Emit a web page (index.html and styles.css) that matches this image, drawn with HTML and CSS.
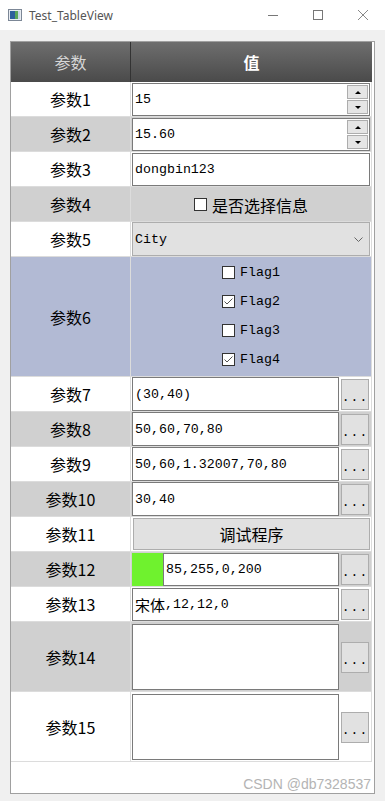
FILE: index.html
```html
<!DOCTYPE html>
<html lang="zh">
<head>
    <meta charset="UTF-8">
    <meta name="viewport" content="width=device-width, initial-scale=1.0">
    <title>Test_TableView</title>
    <link rel="stylesheet" href="styles.css">
</head>
<body>
    <div class="titlebar">
        <svg class="app-icon" width="14" height="12" viewBox="0 0 14 12">
            <rect x="0.5" y="0.5" width="13" height="11" fill="#e8ecf2" stroke="#7c8796"/>
            <rect x="2" y="2" width="5" height="8" fill="#2e5f9c"/>
            <rect x="7" y="2" width="3" height="8" fill="#5aa65a"/>
            <rect x="10" y="2" width="2" height="8" fill="#c9d6e6"/>
        </svg>
        <span class="title">Test_TableView</span>
        <div class="controls">
            <span class="ctl"><svg width="12" height="12" viewBox="0 0 12 12"><line x1="1" y1="6.5" x2="11" y2="6.5" stroke="#777"/></svg></span>
            <span class="ctl"><svg width="12" height="12" viewBox="0 0 12 12"><rect x="1.5" y="1.5" width="9" height="9" fill="none" stroke="#777"/></svg></span>
            <span class="ctl"><svg width="12" height="12" viewBox="0 0 12 12"><path d="M1 1L11 11M11 1L1 11" stroke="#888" fill="none"/></svg></span>
        </div>
    </div>

    <div class="client">
        <div class="frame">
            <div class="tbl">
                <div class="head">
                    <div class="hk">参数</div>
                    <div class="hv">值</div>
                </div>

                <div class="row">
                    <div class="key">参数1</div>
                    <div class="val">
                        <div class="spin">
                            <span class="txt">15</span>
                            <div class="arrows"><span class="up"></span><span class="dn"></span></div>
                        </div>
                    </div>
                </div>

                <div class="row alt">
                    <div class="key">参数2</div>
                    <div class="val">
                        <div class="spin">
                            <span class="txt">15.60</span>
                            <div class="arrows"><span class="up"></span><span class="dn"></span></div>
                        </div>
                    </div>
                </div>

                <div class="row">
                    <div class="key">参数3</div>
                    <div class="val"><div class="edit">dongbin123</div></div>
                </div>

                <div class="row alt">
                    <div class="key">参数4</div>
                    <div class="val center">
                        <label class="check"><span class="cb"></span>是否选择信息</label>
                    </div>
                </div>

                <div class="row">
                    <div class="key">参数5</div>
                    <div class="val full">
                        <div class="combo">
                            <span>City</span>
                            <svg width="9" height="5" viewBox="0 0 9 5"><polyline points="0.5,0.5 4.5,4.5 8.5,0.5" fill="none" stroke="#666"/></svg>
                        </div>
                    </div>
                </div>

                <div class="row sel tall">
                    <div class="key">参数6</div>
                    <div class="val center">
                        <div class="flags">
                            <label class="flag"><span class="cb"></span>Flag1</label>
                            <label class="flag"><span class="cb on"><svg width="11" height="11" viewBox="0 0 11 11"><polyline points="1.5,5.5 4,8 9.5,2.5" fill="none" stroke="#555"/></svg></span>Flag2</label>
                            <label class="flag"><span class="cb"></span>Flag3</label>
                            <label class="flag"><span class="cb on"><svg width="11" height="11" viewBox="0 0 11 11"><polyline points="1.5,5.5 4,8 9.5,2.5" fill="none" stroke="#555"/></svg></span>Flag4</label>
                        </div>
                    </div>
                </div>

                <div class="row">
                    <div class="key">参数7</div>
                    <div class="val full">
                        <div class="edit">(30,40)</div>
                        <button class="more">...</button>
                    </div>
                </div>

                <div class="row alt">
                    <div class="key">参数8</div>
                    <div class="val full">
                        <div class="edit">50,60,70,80</div>
                        <button class="more">...</button>
                    </div>
                </div>

                <div class="row">
                    <div class="key">参数9</div>
                    <div class="val full">
                        <div class="edit">50,60,1.32007,70,80</div>
                        <button class="more">...</button>
                    </div>
                </div>

                <div class="row alt">
                    <div class="key">参数10</div>
                    <div class="val full">
                        <div class="edit">30,40</div>
                        <button class="more">...</button>
                    </div>
                </div>

                <div class="row">
                    <div class="key">参数11</div>
                    <div class="val pad">
                        <button class="run">调试程序</button>
                    </div>
                </div>

                <div class="row alt">
                    <div class="key">参数12</div>
                    <div class="val">
                        <span class="swatch"></span>
                        <div class="edit">85,255,0,200</div>
                        <button class="more">...</button>
                    </div>
                </div>

                <div class="row">
                    <div class="key">参数13</div>
                    <div class="val">
                        <div class="edit"><span class="cn">宋体</span>,12,12,0</div>
                        <button class="more">...</button>
                    </div>
                </div>

                <div class="row alt big">
                    <div class="key">参数14</div>
                    <div class="val">
                        <div class="memo"></div>
                        <button class="more">...</button>
                    </div>
                </div>

                <div class="row big">
                    <div class="key">参数15</div>
                    <div class="val">
                        <div class="memo"></div>
                        <button class="more">...</button>
                    </div>
                </div>
            </div>
            <div class="mark">CSDN @db7328537</div>
        </div>
    </div>
</body>
</html>
```

FILE: styles.css
```css
body {
    margin: 0;
    width: 385px;
    height: 801px;
    overflow: hidden;
    background-color: #f0f0f0;
    font-family: "Noto Sans CJK SC", sans-serif;
    color: #000;
}
.titlebar {
    height: 30px;
    background-color: #fff;
    display: flex;
    align-items: center;
    padding-left: 8px;
}
.title {
    margin-left: 7px;
    font-family: "Noto Sans", sans-serif;
    font-size: 12px;
    color: #555;
}
.controls {
    margin-left: auto;
    display: flex;
}
.ctl {
    width: 45px;
    height: 30px;
    display: flex;
    align-items: center;
    justify-content: center;
}
.client {
    padding: 11px 0 0 10px;
}
.frame {
    width: 365px;
    height: 753px;
    box-sizing: border-box;
    border: 1px solid #a0a0a0;
    background-color: #fff;
    display: flex;
    flex-direction: column;
}
.tbl {
    width: 361px;
}
.head {
    display: grid;
    grid-template-columns: 120px 241px;
    height: 40px;
    background: linear-gradient(#6e6e6e, #4a4a4a);
    font-size: 16px;
}
.hk, .hv {
    display: flex;
    align-items: center;
    justify-content: center;
}
.hk {
    border-right: 1px solid #333;
    color: #d6d6d6;
}
.hv {
    color: #fff;
    font-weight: bold;
}
.row {
    display: grid;
    grid-template-columns: 120px 240px;
    height: 35px;
    box-sizing: border-box;
    border-bottom: 1px solid #dcdcdc;
    border-right: 1px solid #dcdcdc;
    font-size: 16px;
}
.row.alt {
    background-color: #d0d0d0;
}
.row.sel {
    background-color: #b2bad4;
}
.row.tall {
    height: 120px;
}
.row.big {
    height: 70px;
}
.key {
    border-right: 1px solid #dcdcdc;
    display: flex;
    align-items: center;
    justify-content: center;
}
.val {
    display: flex;
    align-items: center;
    padding: 1px 1px 0 1px;
    min-width: 0;
    font-family: "Liberation Mono", monospace;
    font-size: 13.3px;
}
.val.full {
    padding: 0 1px 0 1px;
}
.val.center {
    justify-content: center;
}
.val.pad {
    padding: 1px 1px 1px 2px;
}
.spin, .edit, .memo {
    flex: 1;
    align-self: stretch;
    box-sizing: border-box;
    border: 1px solid #7a7a7a;
    background-color: #fff;
    display: flex;
    align-items: center;
    padding-left: 2px;
    white-space: nowrap;
}
.row.big .memo {
    margin: 1px 0;
}
.spin .txt {
    flex: 1;
}
.arrows {
    display: flex;
    flex-direction: column;
    gap: 1px;
    margin-right: 1px;
}
.up, .dn {
    width: 21px;
    height: 14px;
    box-sizing: border-box;
    border: 1px solid #adadad;
    background-color: #e5e5e5;
    display: flex;
    align-items: center;
    justify-content: center;
}
.up::after {
    content: "";
    border-left: 3px solid transparent;
    border-right: 3px solid transparent;
    border-bottom: 3px solid #000;
}
.dn::after {
    content: "";
    border-left: 3px solid transparent;
    border-right: 3px solid transparent;
    border-top: 3px solid #000;
}
.cn {
    font-family: "Noto Sans CJK SC", sans-serif;
    font-size: 15px;
}
.check {
    display: flex;
    align-items: center;
    gap: 5px;
    font-family: "Noto Sans CJK SC", sans-serif;
    font-size: 16px;
}
.cb {
    width: 13px;
    height: 13px;
    box-sizing: border-box;
    border: 1px solid #333;
    background-color: #fff;
    display: flex;
    align-items: center;
    justify-content: center;
}
.flags {
    display: flex;
    flex-direction: column;
    gap: 16px;
    margin-top: -2px;
}
.flag {
    display: flex;
    align-items: center;
    gap: 5px;
    height: 13px;
}
.combo {
    flex: 1;
    align-self: stretch;
    box-sizing: border-box;
    border: 1px solid #adadad;
    background-color: #e1e1e1;
    display: flex;
    align-items: center;
    justify-content: space-between;
    padding: 0 6px 0 2px;
}
.more {
    width: 28px;
    height: 31px;
    margin-left: 2px;
    margin-right: 1px;
    padding: 0 0 4px 0;
    box-sizing: border-box;
    border: 1px solid #adadad;
    background-color: #e1e1e1;
    font-family: "Liberation Mono", monospace;
    font-size: 13px;
    color: #000;
    display: flex;
    align-items: flex-end;
    justify-content: center;
    letter-spacing: 1px;
}
.run {
    flex: 1;
    align-self: stretch;
    border: 1px solid #adadad;
    background-color: #e1e1e1;
    font-family: "Noto Sans CJK SC", sans-serif;
    font-size: 16px;
    color: #000;
}
.swatch {
    width: 31px;
    align-self: stretch;
    background-color: #6ff22e;
}
.mark {
    margin-top: auto;
    text-align: right;
    padding: 0 3px 1px 0;
    font-family: "Liberation Sans", sans-serif;
    font-size: 14px;
    color: #b4b4b4;
}
```
